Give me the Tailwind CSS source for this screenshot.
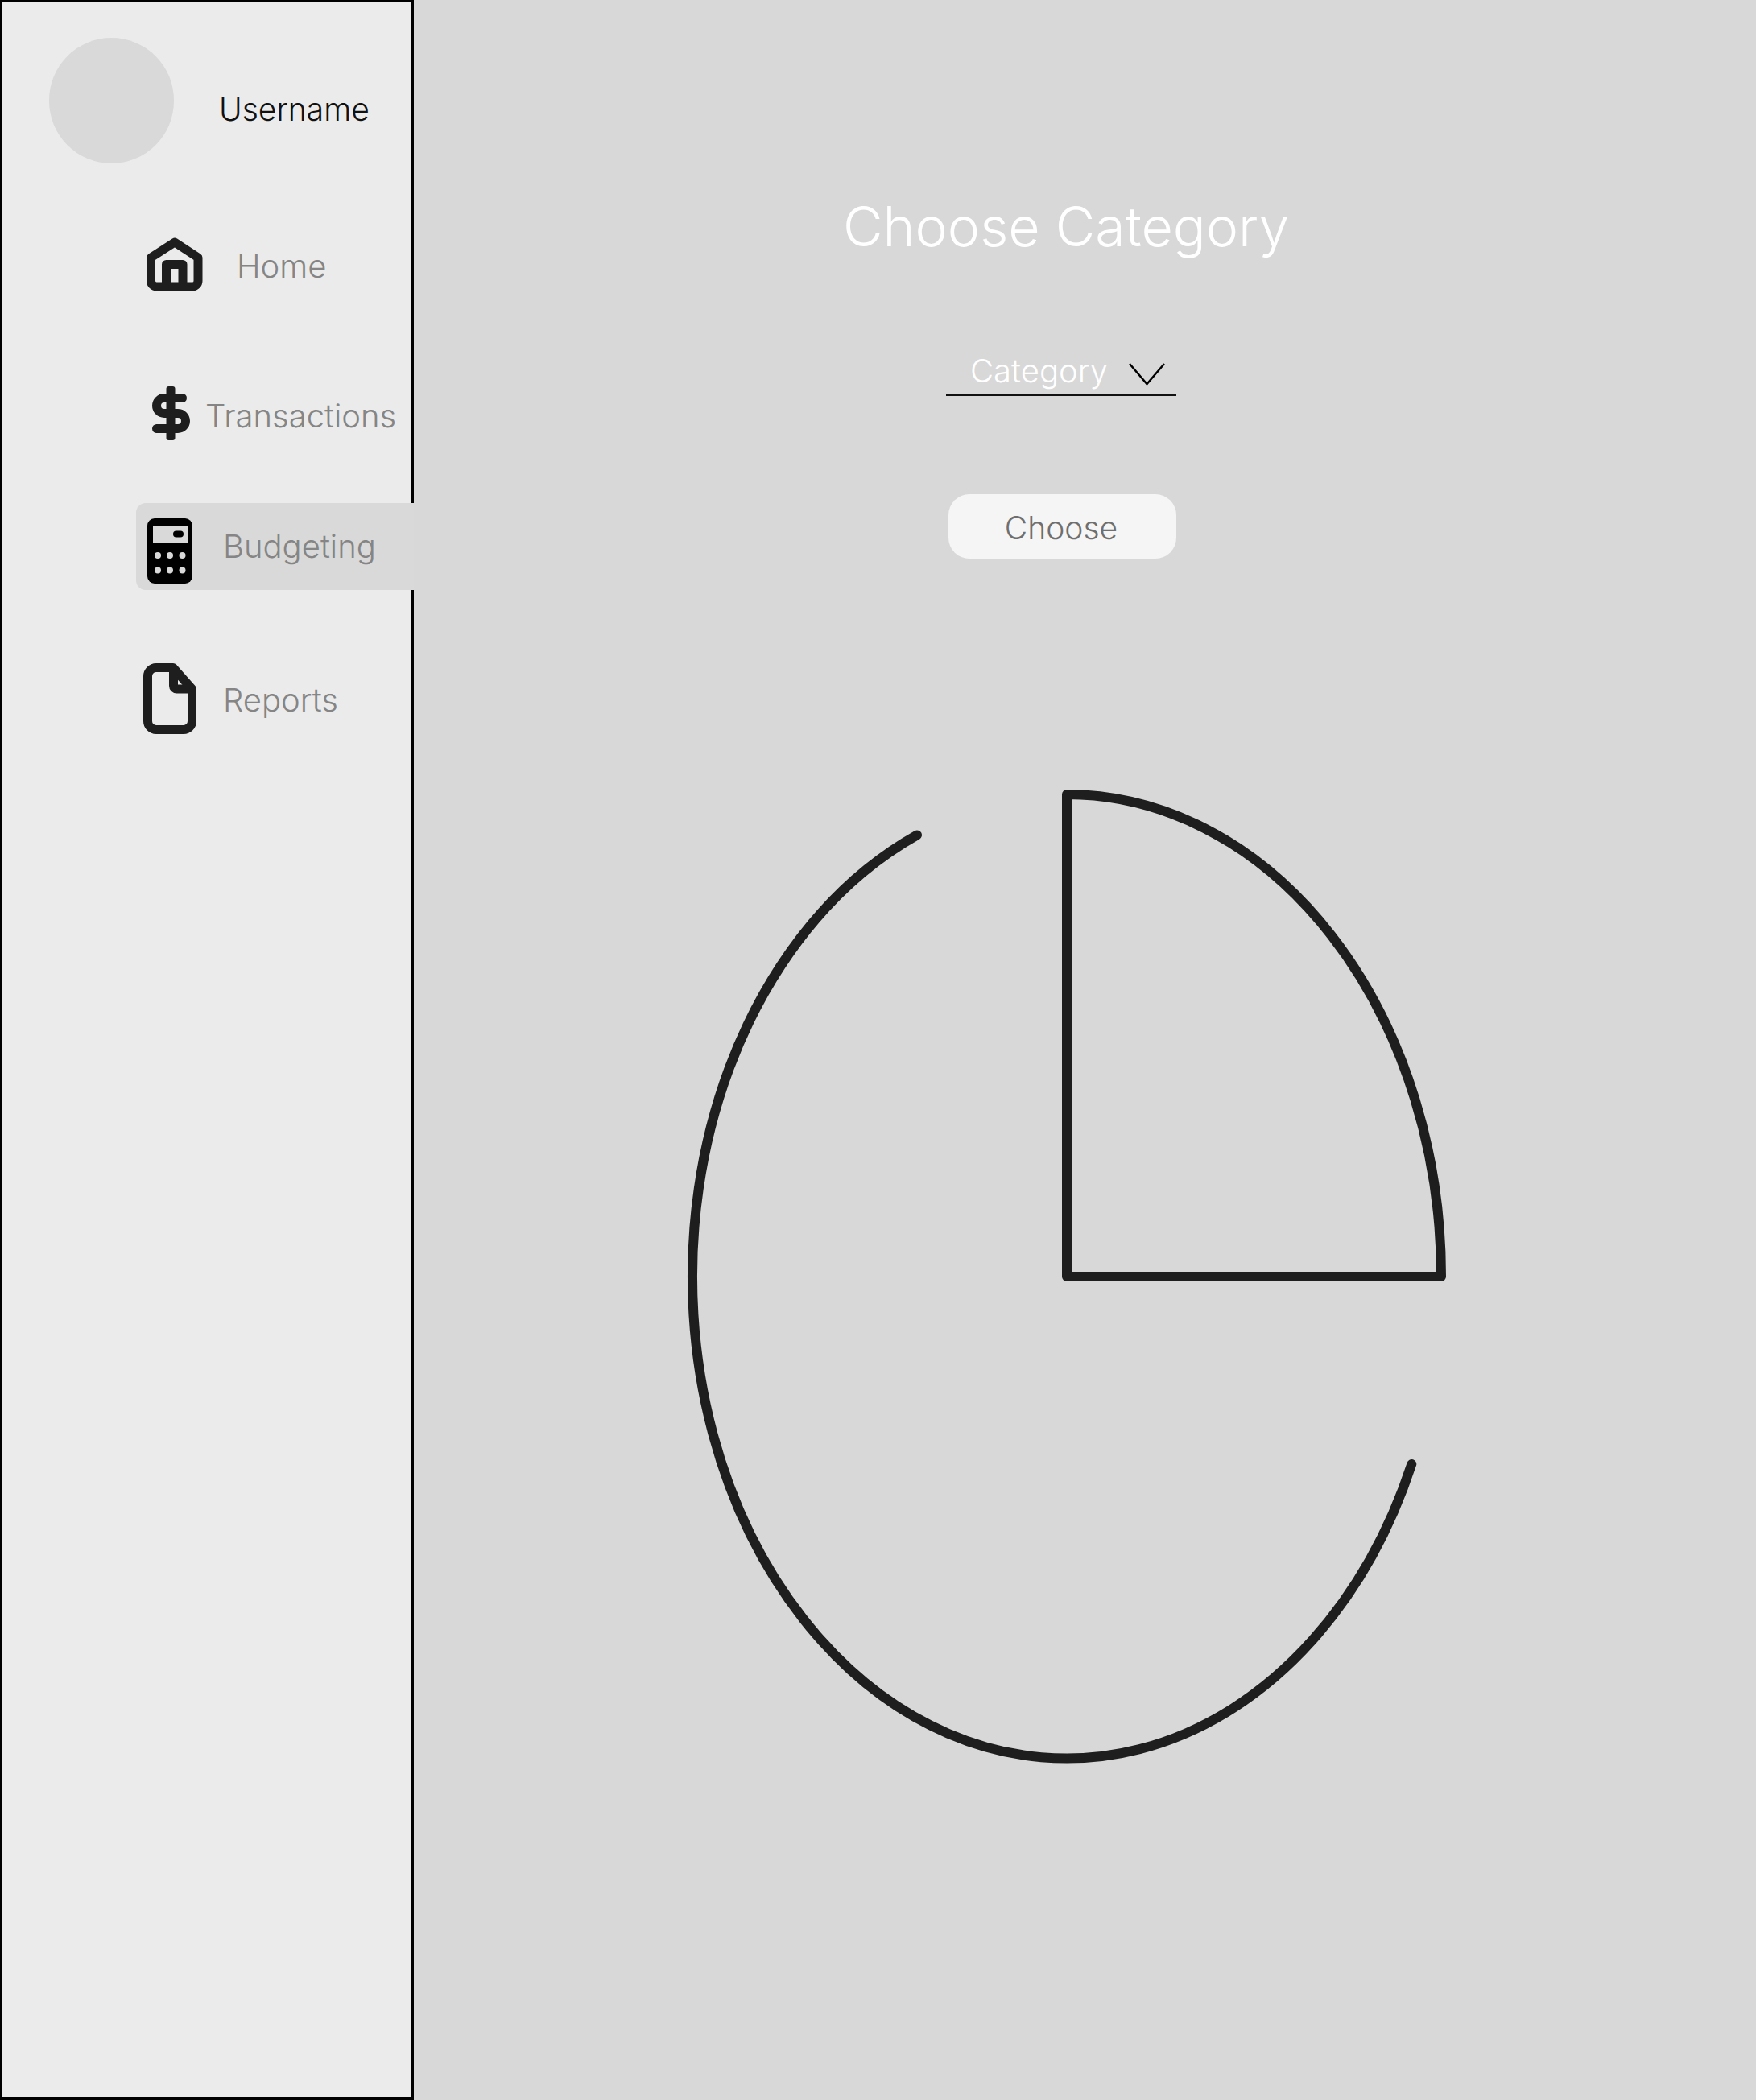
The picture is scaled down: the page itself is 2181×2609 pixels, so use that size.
<!DOCTYPE html>
<html lang="en">

<head>
    <meta charset="UTF-8">
    <meta name="viewport" content="width=device-width, initial-scale=1.0">
    <title>Budgeting</title>
    <script src="https://cdn.jsdelivr.net/npm/@tailwindcss/browser@4"></script>
</head>

<body class="bg-[#d8d8d8] font-['Inter',sans-serif]">
    <div class="flex h-[2609px] w-[2181px]">
        <!-- Sidebar -->
        <aside class="w-[514px] h-[2609px] shrink-0 border-3 border-b-4 border-black bg-[#ebebeb]">
            <div class="flex items-start pt-[44px] pl-[58px]">
                <div class="w-[155px] h-[156px] rounded-full bg-[#d9d9d9]"></div>
                <span class="ml-[56px] mt-[65px] text-[39px] leading-[48px] font-light text-[#111111]">Username</span>
            </div>

            <nav class="flex flex-col">
                <!-- Home -->
                <a class="flex items-start mt-[92px] pl-[179px] h-[67px]">
                    <svg class="w-[70px] h-[67px] shrink-0" viewBox="0 0 70 67" fill="none" stroke="#1e1e1e" stroke-width="11" stroke-linejoin="round">
                        <path d="M35 6 L64 25 V54 A7 7 0 0 1 57 61 H12 A7 7 0 0 1 5.5 54 V25 Z" />
                        <path d="M24.5 61 V33.5 H45 V61" />
                    </svg>
                    <span class="ml-[42px] mt-[12px] text-[40px] leading-[48px] font-[350] text-[#858585]">Home</span>
                </a>
                <!-- Transactions -->
                <a class="flex items-start mt-[118px] pl-[186px] h-[67px]">
                    <svg class="w-[47px] h-[67px] shrink-0" viewBox="0 0 47 67" fill="none" stroke="#1e1e1e" stroke-width="11" stroke-linecap="round">
                        <path d="M37.5 14.5 H15 A9.5 9.5 0 0 0 15 33.5 H32 A9.5 9.5 0 0 1 32 52.5 H5.5" />
                        <rect x="17.5" y="0" width="11" height="67" rx="3" fill="#1e1e1e" stroke="none" />
                    </svg>
                    <span class="ml-[19px] mt-[13px] text-[40px] leading-[48px] font-[350] text-[#858585]">Transactions</span>
                </a>
                <!-- Budgeting (active) -->
                <a class="flex items-start mt-[78px] ml-[166px] mr-[-3px] pl-[14px] pt-[19px] h-[108px] rounded-l-[12px] bg-[#d9d9d9]">
                    <svg class="w-[56px] h-[81px] shrink-0" viewBox="0 0 56 81">
                        <rect x="0" y="0" width="56" height="81" rx="9" fill="#000000" />
                        <rect x="7" y="9" width="43" height="21" fill="#d9d9d9" />
                        <rect x="32" y="15.5" width="13" height="8" rx="4" fill="#000000" />
                        <g fill="#d9d9d9">
                            <circle cx="13" cy="46" r="4" />
                            <circle cx="28" cy="46" r="4" />
                            <circle cx="43.5" cy="46" r="4" />
                            <circle cx="13" cy="64.500" r="4" />
                            <circle cx="28" cy="64.500" r="4" />
                            <circle cx="43.5" cy="64.500" r="4" />
                        </g>
                    </svg>
                    <span class="ml-[38px] mt-[11px] text-[40px] leading-[48px] font-[350] text-[#858585]">Budgeting</span>
                </a>
                <!-- Reports -->
                <a class="flex items-start mt-[91px] pl-[175px] h-[88px]">
                    <svg class="w-[66px] h-[88px] shrink-0" viewBox="0 0 66 88" fill="none" stroke="#1e1e1e" stroke-width="11" stroke-linejoin="round">
                        <path d="M16 5.500 H37 L60.500 32 V72 A10.500 10.500 0 0 1 50 82.500 H16 A10.500 10.500 0 0 1 5.500 72 V16 A10.500 10.500 0 0 1 16 5.500 Z" />
                        <path d="M37.500 5.500 V28 A4 4 0 0 0 41.500 32 H60.500" />
                    </svg>
                    <span class="ml-[33px] mt-[22px] text-[40px] leading-[48px] font-[350] text-[#858585]">Reports</span>
                </a>
            </nav>
        </aside>

        <!-- Main -->
        <main class="flex-1 flex flex-col items-start">
            <h1 class="ml-[533px] mt-[241px] text-[68px] leading-[80px] font-[350] text-white">Choose Category</h1>

            <div class="flex items-start ml-[661px] mt-[111px] w-[286px] h-[60px] border-b-3 border-[#111111]">
                <span class="ml-[30px] mt-[6px] text-[40px] leading-[46px] font-light text-white">Category</span>
                <svg class="ml-[26px] mt-[19px] w-[45px] h-[28px] shrink-0" viewBox="0 0 45 28" fill="none" stroke="#000000" stroke-width="2.500">
                    <path d="M1 1 L22.500 26 L44 1" />
                </svg>
            </div>

            <button class="ml-[664px] mt-[122px] pt-[4px] pr-[3px] w-[283px] h-[80px] rounded-[26px] bg-[#f5f5f5] text-[39px] font-[350] text-[#6f6f6f]">Choose</button>

            <!-- Pie chart -->
            <svg class="ml-[336px] mt-[281px] w-[950px] h-[1225px]" viewBox="850 975 950 1225" fill="none" stroke="#1e1e1e" stroke-width="12" stroke-linecap="round" stroke-linejoin="round">
                <path d="M1325 987 A465 599 0 0 1 1790 1586 H1325 Z" />
                <path d="M1139 1037.500 A465 598.500 0 1 0 1753.300 1819" />
            </svg>
        </main>
    </div>
</body>

</html>
